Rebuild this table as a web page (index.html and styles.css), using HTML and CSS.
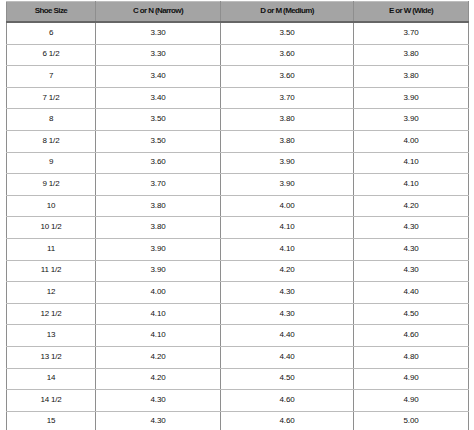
FILE: index.html
```html
<!DOCTYPE html>
<html>
<head>
<meta charset="utf-8">
<link rel="stylesheet" href="styles.css">
</head>
<body>
<table class="size-table">
  <colgroup>
    <col class="c1"><col class="c2"><col class="c3"><col class="c4">
  </colgroup>
  <thead>
    <tr><th>Shoe Size</th><th>C or N (Narrow)</th><th>D or M (Medium)</th><th>E or W (Wide)</th></tr>
  </thead>
  <tbody>
    <tr><td>6</td><td>3.30</td><td>3.50</td><td>3.70</td></tr>
    <tr><td>6 1/2</td><td>3.30</td><td>3.60</td><td>3.80</td></tr>
    <tr><td>7</td><td>3.40</td><td>3.60</td><td>3.80</td></tr>
    <tr><td>7 1/2</td><td>3.40</td><td>3.70</td><td>3.90</td></tr>
    <tr><td>8</td><td>3.50</td><td>3.80</td><td>3.90</td></tr>
    <tr><td>8 1/2</td><td>3.50</td><td>3.80</td><td>4.00</td></tr>
    <tr><td>9</td><td>3.60</td><td>3.90</td><td>4.10</td></tr>
    <tr><td>9 1/2</td><td>3.70</td><td>3.90</td><td>4.10</td></tr>
    <tr><td>10</td><td>3.80</td><td>4.00</td><td>4.20</td></tr>
    <tr><td>10 1/2</td><td>3.80</td><td>4.10</td><td>4.30</td></tr>
    <tr><td>11</td><td>3.90</td><td>4.10</td><td>4.30</td></tr>
    <tr><td>11 1/2</td><td>3.90</td><td>4.20</td><td>4.30</td></tr>
    <tr><td>12</td><td>4.00</td><td>4.30</td><td>4.40</td></tr>
    <tr><td>12 1/2</td><td>4.10</td><td>4.30</td><td>4.50</td></tr>
    <tr><td>13</td><td>4.10</td><td>4.40</td><td>4.60</td></tr>
    <tr><td>13 1/2</td><td>4.20</td><td>4.40</td><td>4.80</td></tr>
    <tr><td>14</td><td>4.20</td><td>4.50</td><td>4.90</td></tr>
    <tr><td>14 1/2</td><td>4.30</td><td>4.60</td><td>4.90</td></tr>
    <tr><td>15</td><td>4.30</td><td>4.60</td><td>5.00</td></tr>
  </tbody>
</table>
</body>
</html>
```
FILE: styles.css
```css
html, body {
  margin: 0;
  padding: 0;
  background: #ffffff;
}
body {
  padding: 1px 0 0 6px;
  font-family: "Liberation Sans", Arial, sans-serif;
  color: #111;
  overflow: hidden;
  height: 430px;
}
.size-table {
  border-collapse: collapse;
  table-layout: fixed;
  width: 462px;
}
.c1 { width: 89px; }
.c2 { width: 125px; }
.c3 { width: 133px; }
.c4 { width: 115px; }
.size-table th,
.size-table td {
  text-align: center;
  padding: 0 0 2px 0;
  border-left: 1px solid #8e8e8e;
  border-right: 1px solid #8e8e8e;
  border-top: 1px solid #bcbcbc;
  border-bottom: 1px solid #bcbcbc;
}
.size-table th {
  background: #a4a4a4;
  height: 17px;
  font-size: 8px;
  font-weight: bold;
  letter-spacing: -0.6px;
  color: #111;
  border-bottom: 2px solid #666;
  border-top: 1px solid #bdbdbd;
}
.size-table td {
  height: 18.6px;
  font-size: 8px;
  letter-spacing: -0.2px;
  color: #111;
}
```
